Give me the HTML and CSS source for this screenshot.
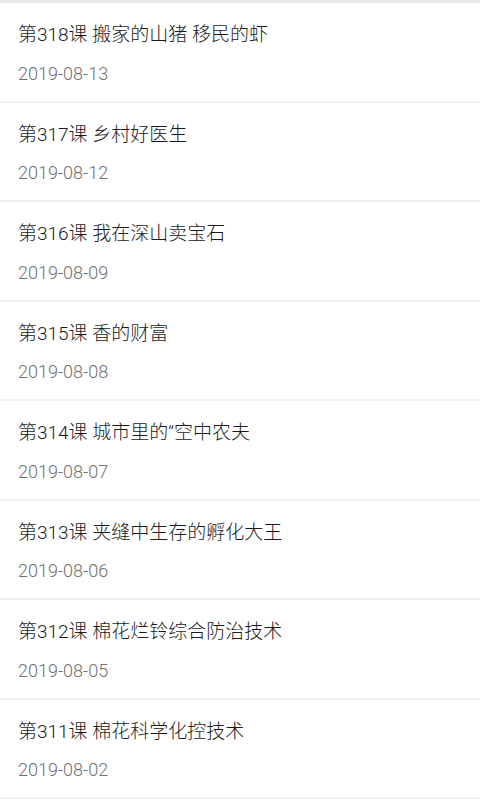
FILE: index.html
```html
<!DOCTYPE html>
<html lang="zh-CN">
<head>
<meta charset="utf-8">
<title>课程列表</title>
<link rel="stylesheet" href="styles.css">
</head>
<body>
<ul class="list">
  <li class="item"><div class="title">第318课 搬家的山猪 移民的虾</div><div class="date">2019-08-13</div></li>
  <li class="item"><div class="title">第317课 乡村好医生</div><div class="date">2019-08-12</div></li>
  <li class="item"><div class="title">第316课 我在深山卖宝石</div><div class="date">2019-08-09</div></li>
  <li class="item"><div class="title">第315课 香的财富</div><div class="date">2019-08-08</div></li>
  <li class="item"><div class="title">第314课 城市里的“空中农夫</div><div class="date">2019-08-07</div></li>
  <li class="item"><div class="title">第313课 夹缝中生存的孵化大王</div><div class="date">2019-08-06</div></li>
  <li class="item"><div class="title">第312课 棉花烂铃综合防治技术</div><div class="date">2019-08-05</div></li>
  <li class="item"><div class="title">第311课 棉花科学化控技术</div><div class="date">2019-08-02</div></li>
</ul>
</body>
</html>
```
FILE: styles.css
```css
html, body {
  margin: 0;
  padding: 0;
  background: #ffffff;
}
body {
  font-family: Roboto, "Noto Sans CJK SC", sans-serif;
  overflow: hidden;
}
.list {
  list-style: none;
  margin: 0;
  padding: 0;
  border-top: 3px solid #e8e8e8;
}
.item {
  box-sizing: border-box;
  height: 99.5px;
  padding: 19px 18px 0;
  border-bottom: 2px solid #f0f0f0;
}
.title {
  font-size: 19px;
  font-weight: 300;
  line-height: 26px;
  color: #1a1a1a;
  white-space: nowrap;
}
.date {
  margin-top: 13.5px;
  font-size: 18px;
  font-weight: 300;
  line-height: 24px;
  color: #707070;
}
```
